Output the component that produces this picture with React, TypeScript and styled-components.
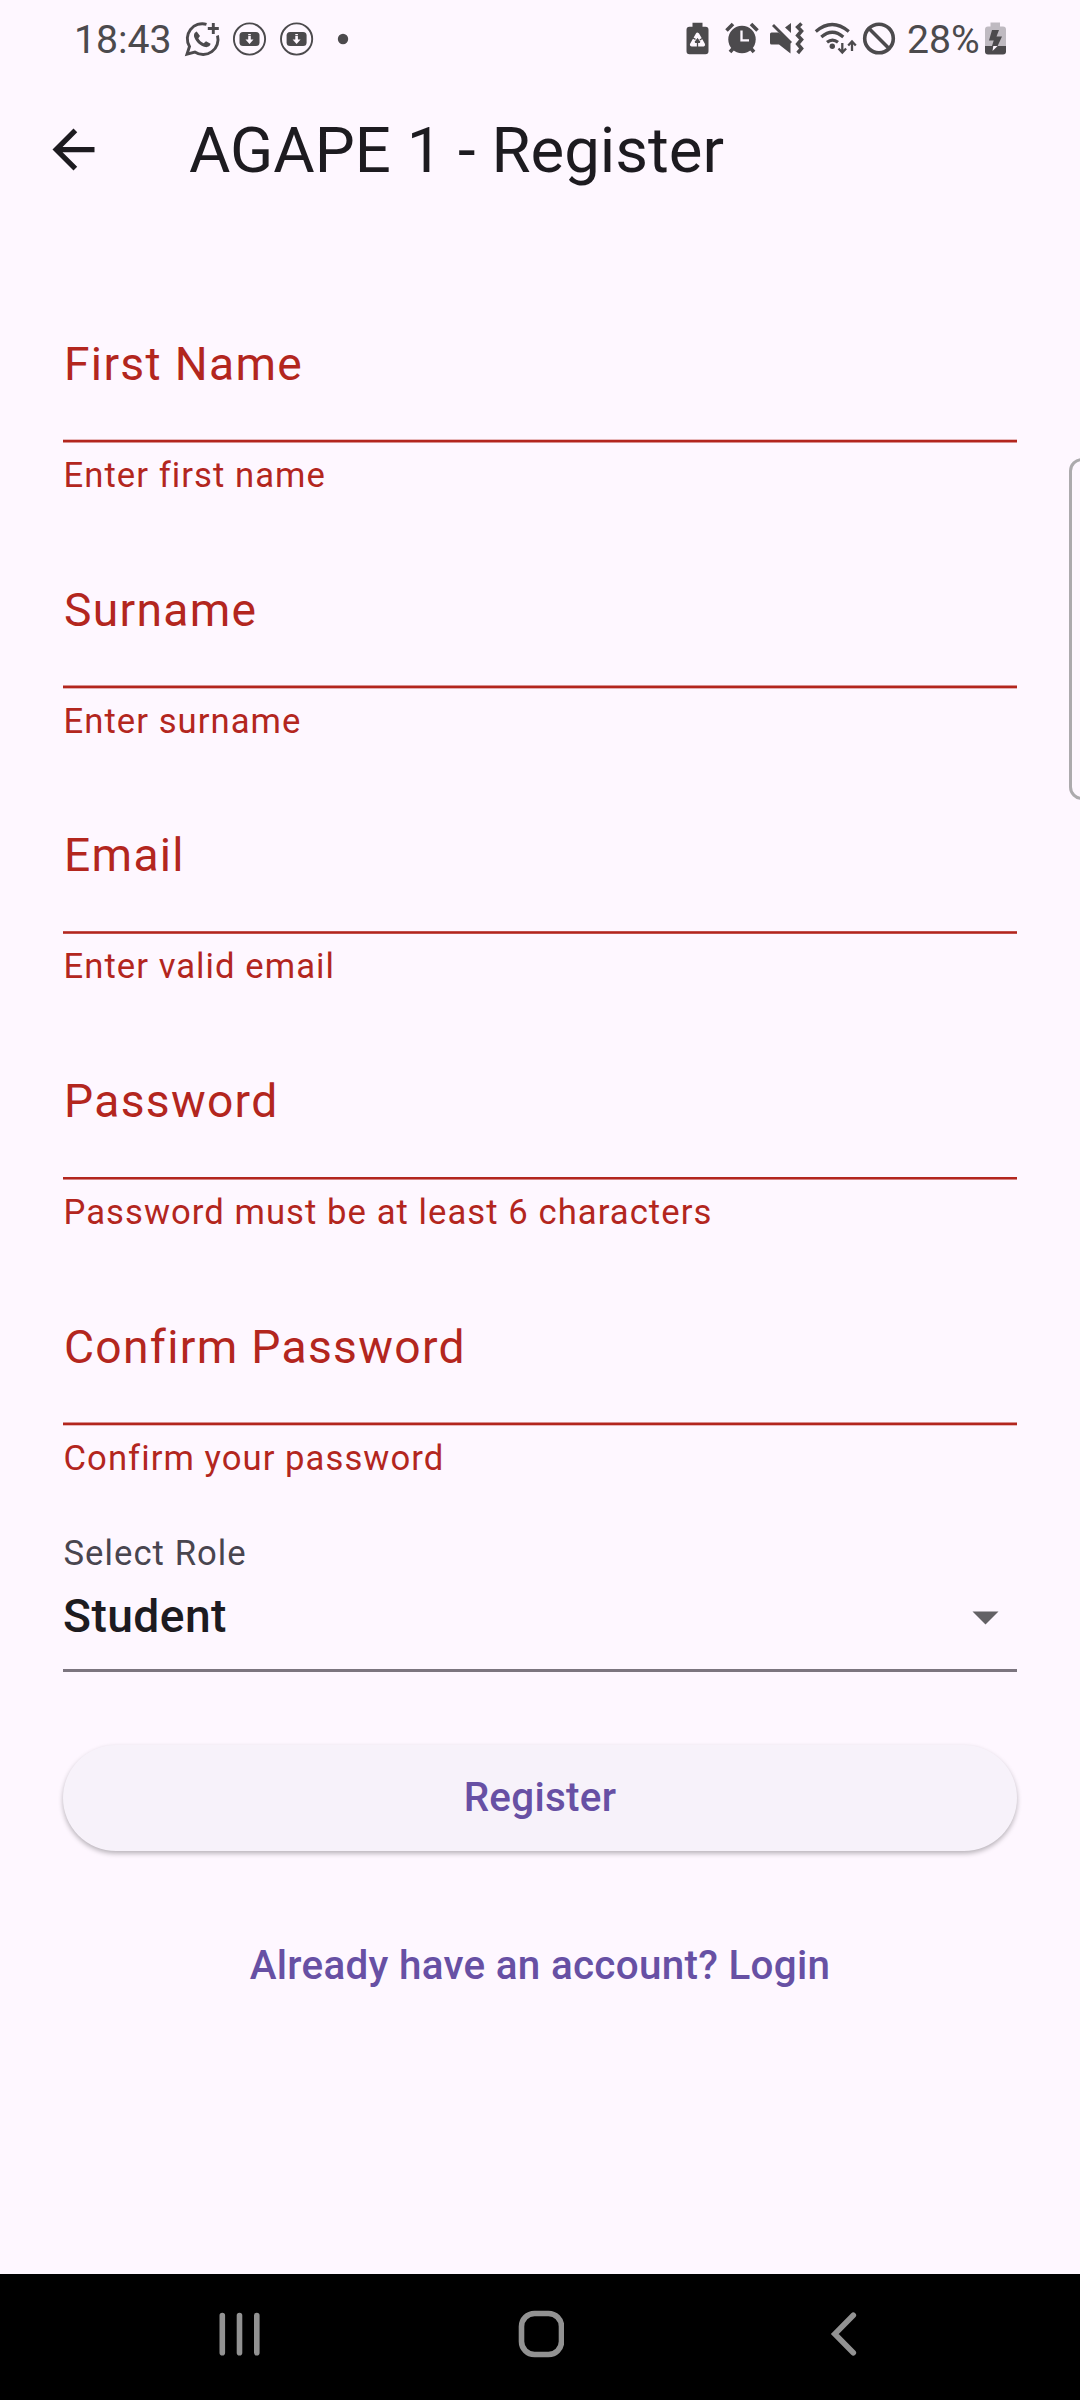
import React from 'react';
import styled, { createGlobalStyle } from 'styled-components';

const Global = createGlobalStyle`
  body { margin: 0; background: #fef7ff; }
  * { box-sizing: border-box; }
`;

const Screen = styled.div`
  position: relative;
  width: 1080px;
  height: 2400px;
  display: flex;
  flex-direction: column;
  background: #fef7ff;
  color: #1d1b20;
  font-family: Roboto, sans-serif;
  overflow: hidden;
`;

const StatusBar = styled.header`
  height: 80px;
  flex: none;
  display: flex;
  justify-content: space-between;
  padding: 0 74px;
  color: #4c4a4d;
`;

const StatusGroup = styled.div`
  display: flex;
`;

const Clock = styled.span`
  width: 106px;
  font-size: 39.2px;
  line-height: 80px;
  white-space: nowrap;
`;

const Percent = styled(Clock)`
  width: 77px;
  margin-left: 8px;
`;

const Glyphs = styled.svg`
  display: block;
  flex: none;
`;

const AppBar = styled.div`
  height: 147px;
  flex: none;
  display: flex;
  align-items: center;
  padding: 0 0 7px 42px;
`;

const BackButton = styled.button`
  width: 63px;
  height: 63px;
  padding: 0;
  border: 0;
  background: none;
  margin: 0 84px 1px 0;
`;

const Title = styled.h1`
  margin: 0;
  padding-top: 2px;
  font-size: 63.5px;
  font-weight: 400;
  line-height: 80px;
  white-space: nowrap;
`;

const Form = styled.main`
  flex: 1;
  display: flex;
  flex-direction: column;
  padding: 92px 63px 0;
`;

const Field = styled.div<{ $height: number }>`
  height: ${(p) => p.$height}px;
  flex: none;
  display: flex;
  flex-direction: column;
  color: #b3261e;
`;

const Label = styled.label`
  height: 120px;
  padding: 17px 0 0 1px;
  font-size: 46.2px;
  line-height: 56px;
  letter-spacing: 1.3125px;
`;

/* A 2.625px line on fractional offsets: one alpha per covered pixel row. */
const Rule = styled.div<{ $rows: number[] }>`
  height: 4px;
  flex: none;
  background: linear-gradient(
    ${(p) => p.$rows.map((a, i) => `rgba(179, 38, 30, ${a}) ${i}px ${i + 1}px`).join(', ')}
  );
`;

const Helper = styled.div`
  padding: 11px 0 0 0.5px;
  font-size: 34.65px;
  line-height: 42px;
  letter-spacing: 1.05px;
`;

const Select = styled.div`
  height: 140px;
  flex: none;
  display: flex;
  flex-direction: column;
  border-bottom: 3px solid #7c757f;
`;

const SelectLabel = styled.div`
  padding-left: 0.5px;
  font-size: 34.65px;
  line-height: 42px;
  letter-spacing: 1.05px;
  color: #49454f;
`;

const SelectRow = styled.div`
  display: flex;
  justify-content: space-between;
  align-items: center;
  padding: 14px 18px 0 0;
  font-size: 46.2px;
  line-height: 56px;
  font-weight: 500;
  letter-spacing: 0.43px;
`;

const Caret = styled(Glyphs)`
  margin-top: 3px;
`;

const RegisterButton = styled.button`
  height: 106px;
  flex: none;
  margin-top: 72.5px;
  padding: 0;
  border: 0;
  border-radius: 53px;
  background: #f7f2fa;
  color: #6750a4;
  font: 500 40.4px/48px Roboto, sans-serif;
  letter-spacing: 0.29px;
  box-shadow: 0 2.6px 5px rgba(0, 0, 0, 0.28);
`;

const LoginLink = styled.a`
  align-self: center;
  margin-top: 91.5px;
  color: #6750a4;
  font-size: 40.4px;
  font-weight: 500;
  line-height: 48px;
  letter-spacing: 0.29px;
  white-space: nowrap;
`;

const EdgePanel = styled.div`
  position: absolute;
  left: 1069px;
  top: 458px;
  width: 40px;
  height: 342px;
  border: 3px solid #acaaad;
  border-radius: 13px;
  background: #fef7ff;
`;

const NavBar = styled.nav`
  height: 126px;
  flex: none;
  display: flex;
  justify-content: space-between;
  align-items: center;
  padding: 0 216px 6px;
  background: #000;
`;

const fields = [
  { label: 'First Name', helper: 'Enter first name', height: 246, rows: [0.3, 1, 1, 0.5] },
  { label: 'Surname', helper: 'Enter surname', height: 245, rows: [0.5, 1, 1, 0.35] },
  { label: 'Email', helper: 'Enter valid email', height: 246, rows: [0, 0.8, 1, 0.8] },
  { label: 'Password', helper: 'Password must be at least 6 characters', height: 246, rows: [0, 1, 1, 0.55] },
  { label: 'Confirm Password', helper: 'Confirm your password', height: 230, rows: [0.5, 1, 1, 0.3] },
];

const DownloadBadge = ({ x }: { x: number }) => (
  <g transform={`translate(${x} 39)`}>
    <circle r="15.6" fill="none" stroke="currentColor" strokeWidth="1.9" />
    <rect x="-10" y="-7" width="20" height="14" rx="3.5" fill="currentColor" />
    <path d="M-1.3-5h2.6v1.2h-2.6zM-1.3-3h2.6V.5H4L0 5-4 .5h2.7z" fill="#fef7ff" />
  </g>
);

const NotificationIcons = () => (
  <Glyphs width="190" height="80" viewBox="180 0 190 80">
    <g fill="none" stroke="currentColor" strokeWidth="2.9">
      <path d="M206.500 24.300A15 15 0 0 0 189.500 46.500L187 54.200 194.800 52A15 15 0 0 0 217.500 35.500" />
      <path d="M213.300 23v11M207.800 28.500h11" />
    </g>
    <path d="M196.700 31.500c-2.300.8-3.400 3.300-2.200 6.200 2 4.700 6 8 10.600 9.300 2.500.6 5-.8 5.500-3.200l-4.600-2.600-2.300 2c-2.500-1-4.300-2.700-5.400-5l1.700-2.200z" fill="currentColor" />
    <DownloadBadge x={249.5} />
    <DownloadBadge x={296.6} />
    <circle cx="343" cy="39" r="5.200" fill="currentColor" />
  </Glyphs>
);

const SystemIcons = () => (
  <Glyphs width="215" height="80" viewBox="684 0 215 80">
    <g fill="currentColor">
      <path d="M692.500 22.700h10v4h3q3 0 3 3v21.500q0 3-3 3h-16q-3 0-3-3V29.700q0-3 3-3h3z" />
      <circle cx="742" cy="39.500" r="13.700" />
      <path d="M771.500 32.500h7l3.500 2.500 8.500 8.500v10l-11.500-9h-7.500q-1.500 0-1.500-1.500v-9q0-1.500 1.500-1.500z" />
      <path d="M791 23v10l-6-5.500z" />
      <circle cx="832.300" cy="46.300" r="2.700" />
    </g>
    <path d="M697.500 34.500l5.800 10.200h-11.600z" fill="none" stroke="#fef7ff" strokeWidth="3.600" strokeLinejoin="round" />
    <g fill="none" stroke="currentColor" strokeWidth="1.300">
      <path d="M697.500 48v-8M692 37.500l3.500 1.800M703.500 37.800l-3.800 2.200" />
    </g>
    <path d="M694.500 42l3-4 3 4z" fill="currentColor" />
    <path d="M741.500 30.500v9.800h7.500" fill="none" stroke="#fef7ff" strokeWidth="2.300" />
    <g fill="none" stroke="currentColor" strokeWidth="3.600">
      <path d="M726.500 30.500l6.500-6.500M751 24l6.500 6.500M730 52l4-4.500M754 52l-4-4.500" />
      <path d="M773 25l18 18" strokeWidth="2.900" />
      <path d="M801.500 23.500l-3.800 3.500 3.800 4-3.800 4.500 3.800 4-3.800 4.500 3.800 4.500-3.800 4.500" />
      <path d="M815.800 31.500q16.300-14 33 0M821.300 37q11-9.500 22 0M827 42.300q5.500-4.300 11 0" strokeWidth="3.200" />
      <path d="M842.300 43v9M838.500 48.500l3.800 4 3.800-4M852 51v-9M848.200 45.500l3.800-4 3.800 4" strokeWidth="2.300" />
      <circle cx="879" cy="38.500" r="14.300" />
      <path d="M869 28.500l20 20" />
    </g>
  </Glyphs>
);

const Battery = () => (
  <Glyphs width="22" height="80" viewBox="984 0 22 80">
    <path d="M990.500 22.500h9.500v4h3q3 0 3 3V46h-21V29.500q0-3 3-3h2.500z" fill="#bfbac1" />
    <path d="M985 46h21v5.500q0 3-3 3h-15q-3 0-3-3z" fill="#4c4a4d" />
    <path d="M992 30h7l-2.500 6.500h5.500L997.600 46H992l1.700-5.500H989z" fill="#4c4a4d" />
    <path d="M993.300 46h4.300L992.500 51z" fill="#fef7ff" />
  </Glyphs>
);

export default function App() {
  return (
    <Screen>
      <Global />
      <StatusBar>
        <StatusGroup>
          <Clock>18:43</Clock>
          <NotificationIcons />
        </StatusGroup>
        <StatusGroup>
          <SystemIcons />
          <Percent>28%</Percent>
          <Battery />
        </StatusGroup>
      </StatusBar>
      <AppBar>
        <BackButton aria-label="Back">
          <Glyphs width="63" height="63" viewBox="0 0 24 24" fill="#1d1b20">
            <path d="M20 11H7.830l5.590-5.590L12 4l-8 8 8 8 1.410-1.410L7.830 13H20z" />
          </Glyphs>
        </BackButton>
        <Title>AGAPE 1 - Register</Title>
      </AppBar>
      <Form>
        {fields.map((f) => (
          <Field key={f.label} $height={f.height}>
            <Label>{f.label}</Label>
            <Rule $rows={f.rows} />
            <Helper>{f.helper}</Helper>
          </Field>
        ))}
        <Select>
          <SelectLabel>Select Role</SelectLabel>
          <SelectRow>
            Student
            <Caret width="27" height="14" viewBox="0 0 27 14">
              <path d="M.5.500h26L13.500 13.500z" fill="#636165" />
            </Caret>
          </SelectRow>
        </Select>
        <RegisterButton>Register</RegisterButton>
        <LoginLink>Already have an account? Login</LoginLink>
      </Form>
      <NavBar>
        <Glyphs width="46" height="46" viewBox="0 0 46 46" stroke="#929292" strokeWidth="5.600" strokeLinecap="round">
          <path d="M6.300 4.500v37.300M23.500 4.500v37.300M40.800 4.500v37.300" />
        </Glyphs>
        <Glyphs width="48" height="48" viewBox="0 0 48 48" fill="none" stroke="#929292" strokeWidth="5.600">
          <rect x="5.500" y="3.500" width="40" height="41" rx="13" />
        </Glyphs>
        <Glyphs width="46" height="46" viewBox="0 0 46 46" fill="none" stroke="#929292" strokeWidth="5.600" strokeLinecap="round">
          <path d="M35.300 4.300L16.800 23 35.300 41.700" />
        </Glyphs>
      </NavBar>
      <EdgePanel />
    </Screen>
  );
}
